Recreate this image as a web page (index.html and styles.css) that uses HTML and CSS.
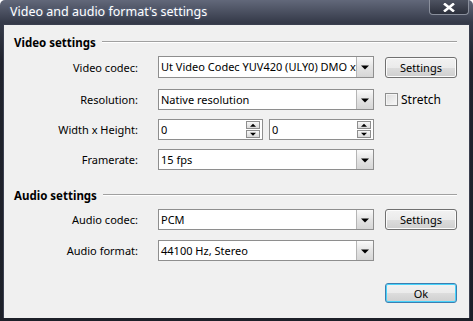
FILE: index.html
```html
<!DOCTYPE html>
<html lang="en">
  <head>
    <meta charset="UTF-8" />
    <title>Video and audio format's settings</title>
    <link rel="stylesheet" href="styles.css">
  </head>
  <body>
    <div class="window">
      <div class="titlebar">
        <span class="title">Video and audio format's settings</span>
        <span class="close">
          <svg width="12" height="9" viewBox="0 0 12 9">
            <path d="M1 0.5 L11 8.5 M11 0.5 L1 8.5" stroke="#fff" stroke-width="2.6" />
          </svg>
        </span>
      </div>

      <div class="client">
        <!-- Video -->
        <div class="group-head video-head">
          <span>Video settings</span>
          <i class="rule"></i>
        </div>
        <div class="form video-form">
          <label>Video codec:</label>
          <div class="combo tall"><span class="value">Ut Video Codec YUV420 (ULY0) DMO x86</span><span class="drop"></span></div>
          <button class="btn">Settings</button>

          <label>Resolution:</label>
          <div class="combo"><span class="value">Native resolution</span><span class="drop"></span></div>
          <div class="check"><span class="box"></span>Stretch</div>

          <label>Width x Height:</label>
          <div class="pair">
            <div class="spin"><span class="value">0</span><span class="arrows"><b class="up"></b><b class="down"></b></span></div>
            <div class="spin"><span class="value">0</span><span class="arrows"><b class="up"></b><b class="down"></b></span></div>
          </div>
          <span></span>

          <label>Framerate:</label>
          <div class="combo"><span class="value">15 fps</span><span class="drop"></span></div>
          <span></span>
        </div>

        <!-- Audio -->
        <div class="group-head audio-head">
          <span>Audio settings</span>
          <i class="rule"></i>
        </div>
        <div class="form audio-form">
          <label>Audio codec:</label>
          <div class="combo"><span class="value">PCM</span><span class="drop"></span></div>
          <button class="btn">Settings</button>

          <label>Audio format:</label>
          <div class="combo"><span class="value">44100 Hz, Stereo</span><span class="drop"></span></div>
          <span></span>
        </div>

        <div class="footer">
          <button class="btn default">Ok</button>
        </div>
      </div>
    </div>
  </body>
</html>
```

FILE: styles.css
```css
body {
  margin: 0;
  font-family: "Noto Sans", "Open Sans", sans-serif;
  font-size: 11px;
  color: #000;
  background: #fff;
}
.window {
  width: 473px;
  height: 321px;
  box-sizing: border-box;
  padding: 0 3px 3px;
  display: flex;
  flex-direction: column;
  border-radius: 5px 5px 0 0;
  background: linear-gradient(#62687a, #363b4a 22px, #20232d 60px, #1d2029);
}
.titlebar {
  height: 24px;
  flex: none;
  display: flex;
  align-items: flex-start;
  justify-content: space-between;
}
.title {
  padding: 3px 0 0 7px;
  color: #fff;
  font-size: 12.5px;
  line-height: 18px;
  text-shadow: 0 0 3px rgba(120, 150, 200, 0.5);
}
.close {
  width: 40px;
  height: 15px;
  margin-right: 1px;
  display: flex;
  align-items: center;
  justify-content: center;
  box-sizing: border-box;
  border: 1px solid #8a8f9c;
  border-top: none;
  border-radius: 0 0 4px 4px;
  background: linear-gradient(#4e5361, #2c303c);
}
.client {
  flex: 1;
  background: #f0f0f0;
  border: 1px solid #3a3f4f;
  border-bottom: none;
  padding: 0 12px 0 10px;
}
.group-head {
  display: flex;
  align-items: center;
  height: 16px;
  font-weight: bold;
  font-size: 11.5px;
}
.group-head .rule {
  flex: 1;
  margin-left: 6px;
  height: 1px;
  background: #a0a0a0;
  border-bottom: 1px solid #fff;
}
.video-head {
  margin-top: 9px;
}
.audio-head {
  margin-top: 17px;
}
.form {
  display: grid;
  grid-template-columns: 144px 216px 83px;
  align-items: center;
}
.form > :nth-child(3n) {
  margin-left: 11px;
}
label {
  text-align: right;
  padding-right: 20px;
}
.video-form {
  margin-top: 6px;
  grid-template-rows: 24px 21px 21px 21px;
  row-gap: 9px;
}
.video-form > :nth-child(-n+3) {
  margin-bottom: 2px;
}
.audio-form {
  margin-top: 6px;
  grid-template-rows: 21px 21px;
  row-gap: 10px;
}
.combo,
.spin {
  height: 21px;
  box-sizing: border-box;
  border: 1px solid #8e8e8e;
  background: #fff;
  display: flex;
  align-items: stretch;
  overflow: hidden;
}
.combo.tall {
  height: 22px;
}
.value {
  flex: 1;
  padding-left: 2px;
  line-height: 19px;
  white-space: nowrap;
  overflow: hidden;
}
.drop {
  width: 16px;
  flex: none;
  border-left: 1px solid #b5b5b5;
  background: linear-gradient(#fafafa, #e4e4e4 50%, #d6d6d6) no-repeat;
  position: relative;
}
.drop::after,
.arrows b::after {
  content: "";
  position: absolute;
  left: 50%;
  top: 50%;
  border-style: solid;
  border-color: #000 transparent transparent;
  border-width: 4px 4px 0;
  transform: translate(-50%, -40%);
}
.pair {
  display: flex;
  gap: 6px;
}
.spin {
  flex: 1;
}
.arrows {
  width: 14px;
  margin: 1px 2px 1px 0;
  display: flex;
  flex-direction: column;
  gap: 1px;
}
.arrows b {
  flex: 1;
  position: relative;
  border: 1px solid #8e8e8e;
  background: linear-gradient(#f8f8f8, #dadada);
}
.arrows b::after {
  border-width: 3px 3px 0;
}
.arrows .up::after {
  border-color: transparent transparent #000;
  border-width: 0 3px 3px;
}
.check {
  display: flex;
  align-items: center;
  gap: 3px;
  font-size: 12px;
}
.check .box {
  width: 13px;
  height: 13px;
  box-sizing: border-box;
  border: 1px solid #8e8f8f;
  background: linear-gradient(135deg, #dcdcdc, #f8f8f8);
  box-shadow: inset 0 0 0 1px #f4f4f4;
}
.btn {
  height: 21px;
  font: inherit;
  color: #000;
  padding: 0;
  border: 1px solid #707070;
  border-radius: 3px;
  background: linear-gradient(#f2f2f2, #ebebeb 50%, #dddddd 51%, #cfcfcf);
  box-shadow: inset 0 0 0 1px #fcfcfc;
}
.footer {
  display: flex;
  justify-content: flex-end;
  margin-top: 22px;
}
.footer .btn {
  width: 72px;
  height: 20px;
}
.btn.default {
  border-color: #3c7fb1;
  box-shadow: inset 0 0 0 1px #48d3fb;
}
```
